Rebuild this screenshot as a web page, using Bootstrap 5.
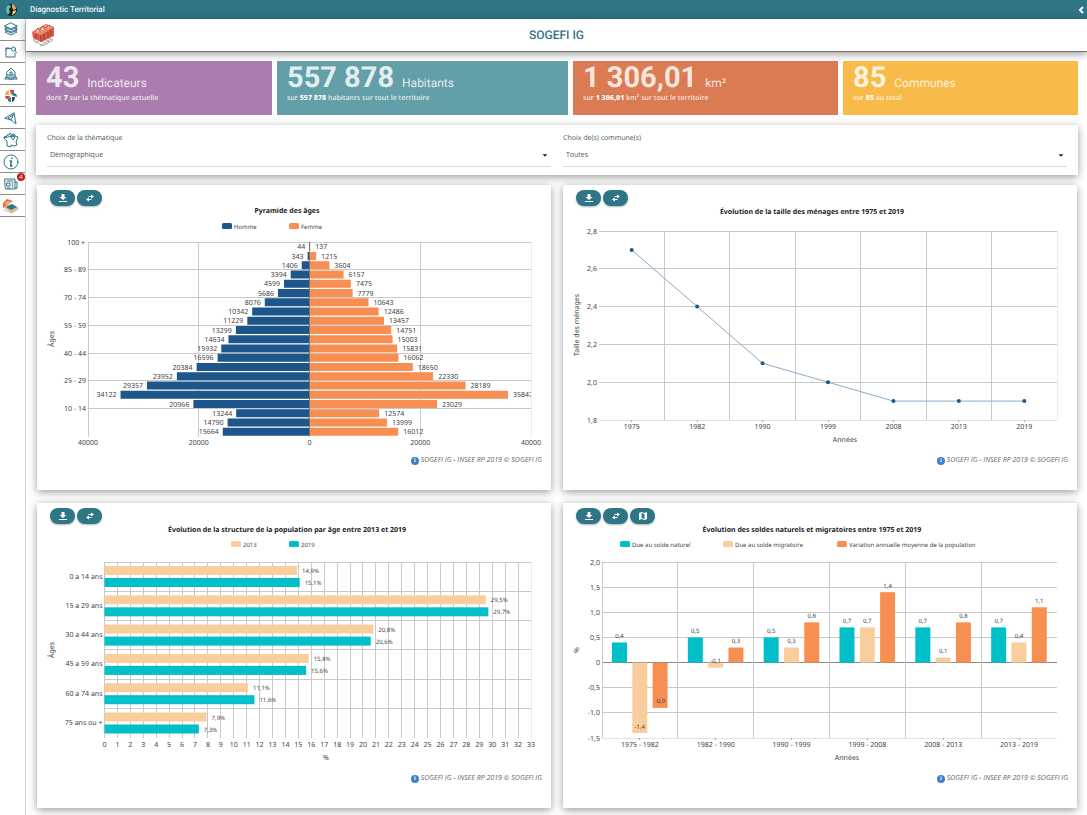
<!DOCTYPE html>
<html lang="fr">
<head>
<meta charset="utf-8">
<meta name="viewport" content="width=device-width, initial-scale=1">
<title>Diagnostic Territorial</title>
<link rel="stylesheet" href="https://cdn.jsdelivr.net/npm/bootstrap@5.3.0/dist/css/bootstrap.min.css">
<style>
  :root { --teal: #2e7586; }
  body { font-family: "Open Sans", "Noto Sans", sans-serif; font-size: 7px; line-height: 12px; color: #444; background: #fff; text-rendering: geometricPrecision; }
  .topbar { background: var(--teal); color: #f2f6f7; height: 19px; font-family: Roboto, sans-serif; font-size: 8px; font-weight: 500; line-height: 19px; }
  .topbar .globe { width: 22px; }
  .shell { min-height: calc(100vh - 19px); }
  .rail { flex: 0 0 26px; border-right: 1px solid #d2d2d2; background: #fff; }
  .rail a { height: 22px; border-bottom: 1px solid #8c8c8c; color: var(--teal); padding-right: 3px; position: relative; }
  .rail svg { width: 16px; height: 16px; fill: none; stroke: currentColor; stroke-width: 1; stroke-linejoin: round; stroke-linecap: round; }
  .alert-dot { position: absolute; right: 0; top: 0; width: 8px; height: 8px; border-radius: 50%; background: #c2201c; color: #fff; font-size: 6px; line-height: 8px; text-align: center; }
  .brandbar { height: 33px; border-bottom: 1px solid #777; box-shadow: 0 2px 8px rgba(0,0,0,.4); background: #fff; padding: 0 5px; }
  .brandbar h1 { font-family: Roboto, sans-serif; font-size: 12px; line-height: 16px; color: var(--teal); font-weight: 500; }
  .brandbar .slot { width: 24px; }
  .content { padding: 9px 9px 7px 10px; }
  .kpis { display: grid; grid-template-columns: 236fr 291fr 265fr 235fr; gap: 5px; }
  .kpi { height: 54px; padding: 3px 10px; color: rgba(255,255,255,.84); font-weight: 600; white-space: nowrap; }
  .kpi .headline { height: 29px; line-height: 29px; font-family: Roboto, sans-serif; }
  .kpi .num { font-size: 29px; font-weight: 700; }
  .kpi .unit { font-size: 12px; font-weight: 400; }
  .kpi b { font-weight: 800; color: rgba(255,255,255,.92); }
  .panel { background: #fff; box-shadow: 0 2px 8px rgba(0,0,0,.4); }
  .filters { margin-top: 10px; height: 50px; padding: 8px 11px 0; display: grid; grid-template-columns: 1fr 1fr; gap: 12px; }
  .filters label { color: #455a64; display: block; font-weight: 500; }
  .filters .form-select { border: 0; border-bottom: 1px solid #d8d8d8; border-radius: 0; padding: 0 14px 2px 3px; height: 22px; font-size: 7px; line-height: 16px; color: #555;
    background-image: url("data:image/svg+xml,%3Csvg xmlns='http://www.w3.org/2000/svg' viewBox='0 0 6 4'%3E%3Cpath d='M1 1h4L3 3z' fill='%23222'/%3E%3C/svg%3E"); background-size: 8px 5px; background-position: right 2px center; }
  .charts { display: grid; grid-template-columns: 1fr 1fr; gap: 13px 12px; margin: 10px 1px 0; }
  .chart-card { padding-bottom: 20px; }
  .tools { padding: 5px 13px 0; gap: 2px; height: 21px; }
  .tools .btn { width: 25px; height: 16px; padding: 0; border-radius: 8px; background: var(--teal); color: #fff; display: flex; align-items: center; justify-content: center; box-shadow: 0 1px 2px rgba(0,0,0,.3); }
  .tools svg { width: 10px; height: 10px; fill: currentColor; }
  .plot { display: block; width: 100%; height: auto; font-family: "Noto Sans", sans-serif; font-size: 7px; fill: #444; }
  .plot .heading { font-weight: 700; fill: #222; }
  .plot .tiny { font-size: 6px; }
  .credit { height: 18px; padding-right: 9px; font-style: italic; color: #666; gap: 2px; line-height: 18px; }
  .info-dot { width: 8px; height: 8px; border-radius: 50%; background: #3c82cc; color: #fff; font: bold 6px/8px "Liberation Serif", serif; text-align: center; }
</style>
</head>
<body>
<header class="topbar d-flex align-items-center">
  <span class="globe d-flex justify-content-center"><svg width="14" height="14" viewBox="0 0 14 14"><circle cx="7" cy="7" r="6" fill="#101c1e"/><path d="M2 4Q4 1 6 2L7 4 5 6 6 9 4 12Q0 8 2 4z" fill="#56bfa2"/><path d="M8 1q4 1 4 5L9 7 8 4z" fill="#efa468"/><path d="M9 8l3-1q0 4-4 5z" fill="#f2d675"/></svg></span>
  <span class="flex-grow-1 ps-2">Diagnostic Territorial</span>
  <svg width="10" height="10" viewBox="0 0 10 10" fill="none" stroke="#fff" stroke-width="2"><path d="M6 2L3 5l3 3"/></svg>
</header>

<div class="shell d-flex">
  <nav class="rail d-flex flex-column" aria-label="Modules">
    <a href="#" class="d-flex align-items-center justify-content-center" aria-label="Couches"><svg viewBox="0 0 16 16"><path d="M8 1l6 3-6 3-6-3zM4 6L2 7l6 3 6-3-2-1M4 9l-2 1 6 3 6-3-2-1M2 4v1l6 3 6-3V4M2 7v1l6 3 6-3V7"/></svg></a>
    <a href="#" class="d-flex align-items-center justify-content-center" aria-label="Parcelles"><svg viewBox="0 0 16 16"><path d="M8 4.500H3V13h9V9M3 6V4h3"/><circle cx="10.500" cy="5" r="2"/><path d="M12 6.500l1.500 2"/></svg></a>
    <a href="#" class="d-flex align-items-center justify-content-center" aria-label="Urbanisme"><svg viewBox="0 0 16 16"><path d="M4 6l4-4 4 4v3H4zM7 9V6h2v3M4 9l-2 4h4M12 9l2 4h-4M2 13l2-2 3 2h2l3-2 2 2M5 11h6M6 13h4"/></svg></a>
    <a href="#" class="d-flex align-items-center justify-content-center" aria-label="Analyse"><svg viewBox="0 0 16 16"><path d="M7 2h4v3L8 7z" fill="#d9423a" stroke="none"/><path d="M2 7q0-4 4-5v5z" fill="#f2ad43" stroke="none"/><path d="M2 8h5L6 11H3z" fill="#d9423a" stroke="none"/><path d="M5 11l3-2v5q-2 0-3-1z" fill="#1b8c83" stroke="none"/><path d="M9 9h3q0 4-3 5z" fill="#284c5c" stroke="none"/><path d="M10 5q4 0 4 4l-3-1-2-1z" fill="#1b8c83" stroke="none"/></svg></a>
    <a href="#" class="d-flex align-items-center justify-content-center" aria-label="Orientation"><svg viewBox="0 0 16 16"><path d="M2 8l9-5 2 11-5-4zM11 3L8 10M8 10L5 8l5-3"/></svg></a>
    <a href="#" class="d-flex align-items-center justify-content-center" aria-label="France"><svg viewBox="0 0 16 16"><path d="M1 5l3-1V3h2l1-2 2 2M12 4l3 1-2 5 1 3-3 1-3-1v2l-4-1V9L1 6z"/><path d="M8 4a2 2 0 014 0q0 2-2 4-2-2-2-4z"/><circle cx="10" cy="4" r=".5"/></svg></a>
    <a href="#" class="d-flex align-items-center justify-content-center" aria-label="Informations"><svg viewBox="0 0 16 16"><circle cx="8" cy="8" r="7"/><path d="M7 7h1.500l-1 5H9M9 4v.5" stroke-width="1.500"/></svg></a>
    <a href="#" class="d-flex align-items-center justify-content-center" aria-label="Actualités"><svg viewBox="0 0 16 16"><path d="M2 3h10v10H3q-1 0-1-2zM12 6h2v6q-1 2-2 0M4 5h6M4 7h3v3H4zM9 7h1M9 9h1M9 11h1M4 12h3"/></svg><span class="alert-dot">4</span></a>
    <a href="#" class="d-flex align-items-center justify-content-center" aria-label="Diagnostic"><svg viewBox="0 0 16 16"><path d="M0 9l8-3 8 4-7 5z" fill="#e8b58b" stroke="none"/><path d="M3 9l6-3 5 3-6 3z" fill="#2f7584" stroke="none"/><path d="M0 5l4-4 6 2-6 4-4 3z" fill="#e56e43" stroke="none"/><path d="M1 5l4-2 4 1-5 3z" fill="#f3a57d" stroke="none"/><path d="M1 12l8 3 6-4" stroke="#bbb"/></svg></a>
  </nav>

  <div class="flex-grow-1">
    <div class="brandbar d-flex align-items-center justify-content-between">
      <svg width="24" height="26" viewBox="0 0 24 26"><path d="M2 18l9-4 11 4-10 6zM5 16l12 6M8 15l11 5M4 21l12-7M9 24l11-7" fill="none" stroke="#b8aaa6"/><path d="M1 10L15 2l8 3v9l-13 6-8-4z" fill="#d65c48"/><path d="M1 10l14-8 8 3-13 8z" fill="#ee8b74"/><path d="M4 10l3-4 2 3M9 8l3-4 2 4M15 6l3-3 1 2" fill="#fbd9c9" stroke="#b94434"/><path d="M10 13v7M13 12v6M17 10v6M20 8v6M5 12v5" fill="none" stroke="#a83529"/></svg>
      <h1 class="m-0">SOGEFI IG</h1>
      <span class="slot"></span>
    </div>

    <main class="content">
      <section class="kpis">
        <div class="kpi" style="background:#ab7dae"><div class="headline d-flex align-items-baseline gap-2"><span class="num">43</span><span class="unit">Indicateurs</span></div>dont <b>7</b> sur la thématique actuelle</div>
        <div class="kpi" style="background:#639fa8"><div class="headline d-flex align-items-baseline gap-2"><span class="num">557 878</span><span class="unit">Habitants</span></div>sur <b>557 878</b> habitants sur tout le territoire</div>
        <div class="kpi" style="background:#da7b53"><div class="headline d-flex align-items-baseline gap-2"><span class="num">1 306,01</span><span class="unit">km²</span></div>sur <b>1 306,01</b> km² sur tout le territoire</div>
        <div class="kpi" style="background:#f8ba49"><div class="headline d-flex align-items-baseline gap-2"><span class="num">85</span><span class="unit">Communes</span></div>sur <b>85</b> au total</div>
      </section>

      <form class="panel filters">
        <div><label for="theme">Choix de la thématique</label><select id="theme" class="form-select"><option>Démographique</option></select></div>
        <div><label for="commune">Choix de(s) commune(s)</label><select id="commune" class="form-select"><option>Toutes</option></select></div>
      </form>

      <section class="charts">
        <article class="panel chart-card">
          <div class="tools d-flex" data-tools="download swap"></div>
          <svg class="plot" id="pyramid" viewBox="0 0 514 246" role="img" aria-label="Pyramide des âges"></svg>
          <div class="credit d-flex align-items-center justify-content-end"><span class="info-dot">i</span>SOGEFI IG - INSEE RP 2019 © SOGEFI IG</div>
        </article>
        <article class="panel chart-card">
          <div class="tools d-flex" data-tools="download swap"></div>
          <svg class="plot" id="households" viewBox="0 0 514 246" role="img" aria-label="Taille des ménages"></svg>
          <div class="credit d-flex align-items-center justify-content-end"><span class="info-dot">i</span>SOGEFI IG - INSEE RP 2019 © SOGEFI IG</div>
        </article>
        <article class="panel chart-card">
          <div class="tools d-flex" data-tools="download swap"></div>
          <svg class="plot" id="structure" viewBox="0 0 514 246" role="img" aria-label="Structure de la population"></svg>
          <div class="credit d-flex align-items-center justify-content-end"><span class="info-dot">i</span>SOGEFI IG - INSEE RP 2019 © SOGEFI IG</div>
        </article>
        <article class="panel chart-card">
          <div class="tools d-flex" data-tools="download swap map"></div>
          <svg class="plot" id="balances" viewBox="0 0 514 246" role="img" aria-label="Soldes naturels et migratoires"></svg>
          <div class="credit d-flex align-items-center justify-content-end"><span class="info-dot">i</span>SOGEFI IG - INSEE RP 2019 © SOGEFI IG</div>
        </article>
      </section>
    </main>
  </div>
</div>

<script src="https://cdn.jsdelivr.net/npm/bootstrap@5.3.0/dist/js/bootstrap.bundle.min.js"></script>
<script>
const NAVY = '#1d568a', ORANGE = '#f78f53', PEACH = '#facd9d', CYAN = '#00bfc8';
const icons = {
  download: ['Télécharger', '<path d="M3.500 1h3v3H8.500L5 7 1.500 4h2zM1 8h8v1H1z"/>'],
  swap: ['Permuter', '<path d="M6 1.500l3 2-3 2V4H3.500V3H6zM4 4.500l-3 2 3 2V7h2.500V6H4z"/>'],
  map: ['Carte', '<path d="M1 2l2.500-1 3 1L9 1v7L6.500 9l-3-1L1 9zM3.500 2v5l3 1V3z" fill-rule="evenodd"/>']
};
document.querySelectorAll('[data-tools]').forEach(bar => {
  bar.innerHTML = bar.dataset.tools.split(' ').map(k => `<button type="button" class="btn" aria-label="${icons[k][0]}"><svg viewBox="0 0 10 10">${icons[k][1]}</svg></button>`).join('');
});

const line = (x1, y1, x2, y2, c = '#c9c9c9') => `<path d="M${x1} ${y1}L${x2} ${y2}" stroke="${c}" fill="none" shape-rendering="crispEdges"/>`;
const rect = (x, y, w, h, c) => `<rect x="${x}" y="${y}" width="${w}" height="${h}" fill="${c}"/>`;
// y is the vertical middle of the text
const text = (x, y, s, anchor = 'middle', cls = '') => `<text x="${x}" y="${y + 2.5}" text-anchor="${anchor}" class="${cls}">${s}</text>`;
const side = (x, y, s) => `<text transform="translate(${x} ${y}) rotate(-90)" text-anchor="middle">${s}</text>`;
const key = (x, s, c) => `<rect x="${x}" y="17" width="10" height="6" rx="1.500" fill="${c}"/>` + text(x + 12, 20, s, 'start', 'tiny');
const fr = (v, d = 1) => v.toFixed(d).replace('.', ',');

{ // Pyramide des âges
  const men = [44,343,1406,3394,4599,5686,8076,10342,11229,13299,14634,15932,16596,20384,23952,29357,34122,20966,13244,14790,15664];
  const women = [137,1215,3604,6157,7475,7779,10643,12486,13457,14751,15003,15831,16062,18650,22330,28189,35847,23029,12574,13999,16012];
  const ages = ['100 +','85 - 89','70 - 74','55 - 59','40 - 44','25 - 29','10 - 14'];
  const left = 51, right = 494, top = 36, row = 9.25, zero = (left + right) / 2, k = (right - left) / 80000, bottom = top + 21 * row;
  let s = text(250, 4, 'Pyramide des âges', 'middle', 'heading') + key(185, 'Homme', NAVY) + key(252, 'Femme', ORANGE);
  ages.forEach((a, i) => { const y = top + i * 3 * row; s += line(left, y, right, y) + text(i ? left - 2 : left - 3, y, a, 'end'); });
  [-40000, -20000, 0, 20000, 40000].forEach(v => { const x = zero + v * k; s += line(x, top, x, bottom + 1, v === 40000 ? '#ececec' : '#c9c9c9') + text(x, 236, Math.abs(v)); });
  s += '<clipPath id="area"><path d="M0 0H494V246H0z"/></clipPath><g clip-path="url(#area)">';
  men.forEach((m, i) => {
    const y = top + i * row + .75, w = women[i];
    s += rect(zero - m * k, y, m * k, 8, NAVY) + rect(zero, y, w * k, 8, ORANGE);
    s += text(zero - m * k - 4, y + 4, m, 'end') + text(zero + w * k + 5, y + 4, w, 'start');
  });
  s += '</g>' + `<path d="M${zero} ${top}V${bottom}" stroke="#8b6f6b"/>` + side(17, 133, 'Âges');
  pyramid.innerHTML = s;
}

{ // Taille des ménages
  const years = [1975,1982,1990,1999,2008,2013,2019], size = [2.7,2.4,2.1,2.0,1.9,1.9,1.9];
  const left = 36, right = 494, top = 25, bottom = 214, step = (right - left) / 7, y = v => bottom - (v - 1.8) * 189;
  let s = text(249, 5, 'Évolution de la taille des ménages entre 1975 et 2019', 'middle', 'heading');
  for (let i = 0; i <= 5; i++) { const v = 1.8 + i * .2; s += line(left, y(v), right, y(v), i ? '#c9c9c9' : '#e2e2e2') + text(left - 2, y(v), fr(v), 'end'); }
  for (let i = 1; i <= 7; i++) s += line(left + i * step, top, left + i * step, bottom, i < 7 ? '#c9c9c9' : '#ececec');
  const pts = size.map((v, i) => [left + (i + .5) * step, y(v)]);
  s += `<polyline points="${pts.join(' ')}" fill="none" stroke="#8ba9c6"/>`;
  pts.forEach(([x, py], i) => { s += `<circle cx="${x}" cy="${py}" r="2" fill="${NAVY}"/>` + line(x, bottom, x, bottom + 2, '#c99') + text(x, 220, years[i]); });
  s += text(282, 233, 'Années') + side(16, 119, 'Taille des ménages');
  households.innerHTML = s;
}

{ // Structure par âge
  const cats = ['0 a 14 ans','15 a 29 ans','30 a 44 ans','45 a 59 ans','60 a 74 ans','75 ans ou +'];
  const a = [14.9,29.5,20.8,15.8,11.1,7.9], b = [15.1,29.7,20.6,15.6,11.6,7.3];
  const left = 67.5, right = 494, top = 38, row = 29.300, k = (right - left) / 33, bottom = top + 6 * row;
  let s = text(250, 5, 'Évolution de la structure de la population par âge entre 2013 et 2019', 'middle', 'heading') + key(194, '2013', PEACH) + key(252, '2019', CYAN);
  for (let i = 0; i <= 33; i++) { const x = left + i * k; s += line(x, top, x, bottom, i < 33 ? '#c9c9c9' : '#ececec') + text(x, 220, i); }
  cats.forEach((c, i) => {
    const y = top + i * row;
    s += line(left, y, right, y) + text(left - 2, y + 14, c, 'end');
    s += rect(left, y + 4, a[i] * k, 9, PEACH) + rect(left, y + 16, b[i] * k, 9, CYAN);
    s += text(left + a[i] * k + 5, y + 8.5, fr(a[i]) + '%', 'start', 'tiny') + text(left + b[i] * k + 5, y + 20.5, fr(b[i]) + '%', 'start', 'tiny');
  });
  structure.innerHTML = s + text(289, 233, '%') + side(17, 126, 'Âges');
}

{ // Soldes naturels et migratoires
  const periods = ['1975 - 1982','1982 - 1990','1990 - 1999','1999 - 2008','2008 - 2013','2013 - 2019'];
  const rows = [[.4,-1.4,-.9],[.5,-.1,.3],[.5,.3,.8],[.7,.7,1.4],[.7,.1,.8],[.7,.4,1.1]], colors = [CYAN, PEACH, ORANGE];
  const left = 39, right = 494, top = 38, unit = 50.300, zero = top + 2 * unit, bottom = zero + 1.5 * unit, step = (right - left) / 6;
  let s = text(249, 5, 'Évolution des soldes naturels et migratoires entre 1975 et 2019', 'middle', 'heading')
    + key(57, 'Due au solde naturel', CYAN) + key(160, 'Due au solde migratoire', PEACH) + key(274, 'Variation annuelle moyenne de la population', ORANGE);
  for (let v = 2; v >= -1.5; v -= .5) { const y = zero - v * unit; s += line(left, y, right, y, v === -1.5 ? '#e2e2e2' : v ? '#c9c9c9' : '#888') + text(left - 2, y, v ? fr(v) : '0', 'end'); }
  for (let i = 0; i < 6; i++) s += line(left + i * step, top, left + i * step, bottom);
  rows.forEach((vals, i) => {
    const x0 = left + i * step;
    vals.forEach((v, j) => {
      const x = x0 + 10 + j * 20.3, y = zero - v * unit;
      s += rect(x, Math.min(zero, y), 15, Math.abs(v) * unit, colors[j]) + text(x + 7.5, y - 7, fr(v), 'middle', 'tiny');
    });
    s += line(x0 + step / 2, bottom, x0 + step / 2, bottom + 2, '#c99') + text(x0 + step / 2, 220, periods[i]);
  });
  balances.innerHTML = s + text(284, 233, 'Années') + side(16, 126, '%');
}
</script>
</body>
</html>
